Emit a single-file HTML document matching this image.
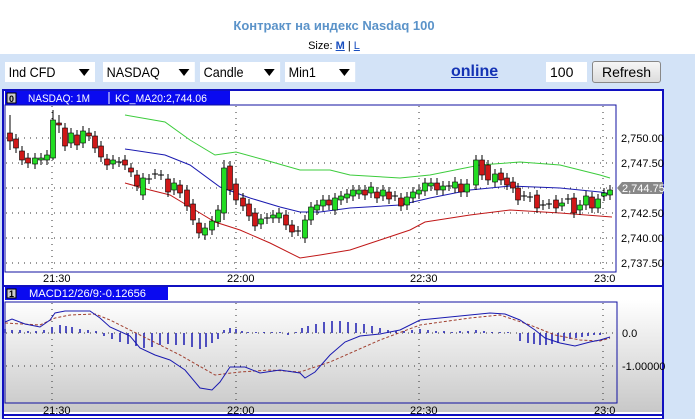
<!DOCTYPE html>
<html><head><meta charset="utf-8"><style>
body{margin:0;width:695px;height:419px;overflow:hidden;background:#fff;font-family:"Liberation Sans",sans-serif;position:relative}
.a{position:absolute}
.sel{position:absolute;top:62px;height:20px;background:#fff;font-size:14px;line-height:20px;padding-left:4px;box-sizing:border-box;transform:scaleX(.9);transform-origin:left}
.sel b{position:absolute;right:6px;top:7px;width:0;height:0;border-left:6px solid transparent;border-right:6px solid transparent;border-top:7px solid #000}
</style></head><body>
<div class="a" style="left:0;top:18px;width:668px;text-align:center;font-size:13px;font-weight:bold;color:#5b93c9">Контракт на индекс Nasdaq 100</div>
<div class="a" style="left:0;top:40px;width:668px;text-align:center;font-size:11px;color:#000">Size: <u style="color:#1a4fbf;font-weight:bold">M</u> | <u style="color:#1a4fbf">L</u></div>
<div class="a" style="left:0;top:54px;width:695px;height:365px;background:#d3e3f7"></div>
<div class="sel" style="left:5px;width:100px">Ind CFD<b></b></div>
<div class="sel" style="left:103px;width:102px">NASDAQ<b></b></div>
<div class="sel" style="left:200px;width:89px">Candle<b></b></div>
<div class="sel" style="left:285px;width:78px">Min1<b></b></div>
<div class="a" style="left:451px;top:63px;font-size:16px;font-weight:bold;color:#1433b4;text-decoration:underline">online</div>
<div class="a" style="left:546px;top:62px;width:41px;height:20px;background:#fff;font-size:14px;line-height:20px;padding-left:4px;box-sizing:border-box">100</div>
<div class="a" style="left:592px;top:61px;width:69px;height:22px;border:1px solid #888;border-radius:3px;background:linear-gradient(#f6f6f6,#dcdcdc);box-sizing:border-box;font-size:14px;line-height:20px;text-align:center">Refresh</div>
<svg class="a" style="left:0;top:0" width="695" height="419" id="s">
<rect x="3" y="90" width="660" height="329" fill="#fff" stroke="#1010c0" stroke-width="2"/>
<defs><linearGradient id="g" x1="0" y1="0" x2="0" y2="1"><stop offset="0" stop-color="#fff"/><stop offset="1" stop-color="#c8c8c8"/></linearGradient></defs>
<rect x="4" y="300" width="658" height="112" fill="url(#g)"/>
<rect x="5" y="91" width="225" height="14" fill="#0a0af0"/>
<rect x="7" y="93" width="9" height="10" fill="#ccc" stroke="#000"/>
<text x="9" y="102" font-size="9" font-weight="bold" font-family="Liberation Sans">0</text>
<text x="28" y="102" font-size="11" fill="#fff" font-family="Liberation Sans" textLength="62" lengthAdjust="spacingAndGlyphs">NASDAQ: 1M</text>
<line x1="109" y1="92" x2="109" y2="104" stroke="#fff"/>
<text x="115" y="102" font-size="11" fill="#fff" font-family="Liberation Sans" textLength="92" lengthAdjust="spacingAndGlyphs">KC_MA20:2,744.06</text>
<rect x="5" y="105" width="611" height="167" fill="none" stroke="#1010a0"/>
<g stroke="#333" stroke-dasharray="1,5" stroke-width="1">
<line x1="6" x2="615" y1="138" y2="138"/><line x1="6" x2="615" y1="163" y2="163"/><line x1="6" x2="615" y1="188" y2="188"/><line x1="6" x2="615" y1="213" y2="213"/><line x1="6" x2="615" y1="238" y2="238"/><line x1="6" x2="615" y1="263" y2="263"/>
<line x1="52" x2="52" y1="106" y2="271"/><line x1="236" x2="236" y1="106" y2="271"/><line x1="419" x2="419" y1="106" y2="271"/><line x1="603" x2="603" y1="106" y2="271"/>
</g>
<g font-size="11" font-family="Liberation Sans" fill="#000">
<text x="621" y="142">2,750.00</text><text x="621" y="167">2,747.50</text><text x="621" y="217">2,742.50</text><text x="621" y="242">2,740.00</text><text x="621" y="267">2,737.50</text>
<text x="43" y="282">21:30</text><text x="227" y="282">22:00</text><text x="410" y="282">22:30</text><text x="594" y="282">23:0</text>
<text x="43" y="414">21:30</text><text x="227" y="414">22:00</text><text x="410" y="414">22:30</text><text x="594" y="414">23:0</text>
</g>
<polygon points="617,188 622,182 663,182 663,194 622,194" fill="#888"/>
<text x="622" y="192" font-size="11" fill="#fff" font-family="Liberation Sans">2,744.75</text>
<polyline fill="none" stroke="#3ccc3c" points="125,115 165,122 190,140 215,155 236,152 265,160 300,170 330,170 350,175 400,178 430,175 480,165 520,162 560,165 600,175 610,178"/>
<polyline fill="none" stroke="#1a1ab0" points="125,149 165,155 190,165 220,187 250,198 280,207 300,212 320,212 350,208 400,205 430,198 470,190 510,186 560,188 600,192 612,194"/>
<polyline fill="none" stroke="#c01818" points="125,183 150,190 170,195 190,207 215,222 240,230 270,243 300,258 320,255 350,250 380,240 410,230 425,222 470,215 510,210 560,213 612,217"/>
<g id="c"></g>
<line x1="4" y1="286" x2="663" y2="286" stroke="#1010c0" stroke-width="2"/>
<rect x="5" y="287" width="163" height="13" fill="#0a0af0"/>
<rect x="7" y="289" width="9" height="9" fill="#ccc" stroke="#000"/>
<text x="9" y="297" font-size="9" font-weight="bold" font-family="Liberation Sans">1</text>
<text x="29" y="297" font-size="11" fill="#fff" font-family="Liberation Sans" textLength="117" lengthAdjust="spacingAndGlyphs">MACD12/26/9:-0.12656</text>
<rect x="5" y="302" width="612" height="101" fill="none" stroke="#1010a0"/>
<g stroke="#333" stroke-dasharray="1,5">
<line x1="6" x2="616" y1="333" y2="333"/><line x1="6" x2="616" y1="366" y2="366"/>
<line x1="52" x2="52" y1="303" y2="402"/><line x1="236" x2="236" y1="303" y2="402"/><line x1="419" x2="419" y1="303" y2="402"/><line x1="603" x2="603" y1="303" y2="402"/>
</g>
<text x="622" y="337" font-size="11" font-family="Liberation Sans">0.0</text>
<text x="622" y="370" font-size="11" font-family="Liberation Sans">-1.00000</text>
<g id="h" stroke="#1a1ab0" stroke-width="1.5"></g>
<polyline fill="none" stroke="#a04030" stroke-dasharray="3,2" points="5,323 40,325 55,318 70,315 95,314 110,320 140,335 180,355 215,375 240,372 270,370 300,372 330,362 380,340 420,325 470,318 500,315 530,325 555,335 580,340 600,341 610,338"/>
<polyline fill="none" stroke="#1a1ab0" points="5,322 12,319 25,324 40,327 50,320 55,313 65,311 90,311 100,318 110,327 130,336 140,348 155,355 170,360 185,370 200,388 212,390 220,382 230,367 245,367 260,373 280,370 300,373 305,378 315,372 330,355 345,342 360,336 380,334 400,330 420,320 440,318 470,315 490,313 505,314 520,320 535,330 545,338 560,343 575,346 590,342 600,340 610,337"/>
<line x1="4" y1="415" x2="663" y2="415" stroke="#1010c0" stroke-width="2"/>
</svg>
<script>
var d=[[10,133,141,115,150],[16,139,148],[22,151,160],[28,158,163],[35,164,158],[41,160,158],[47,160,155],[53,158,120,110,160],[59,123,125,115,133],[65,128,146],[71,143,133],[77,135,145],[83,143,131],[89,133,136],[95,136,148],[101,146,157],[107,159,165],[113,164,160],[119,162,162],[125,160,165],[131,168,172],[137,175,186],[143,195,178],[149,179,179],[155,174,174],[161,175,175],[168,179,192],[174,190,183],[180,185,193],[187,190,206],[193,204,220],[199,223,233],[205,235,228],[212,230,221],[218,222,210],[224,213,168,160,220],[230,166,190],[236,184,200],[243,198,206],[249,204,216],[255,213,226],[261,224,219],[267,219,218],[273,218,215],[279,218,213],[286,215,225],[292,225,232],[298,231,231],[305,238,220],[311,220,207],[317,210,205],[323,206,200],[329,200,205],[335,210,198],[341,200,196],[347,198,194],[353,196,190],[359,194,190],[365,190,195],[371,193,187],[377,192,198],[383,196,190],[389,192,199],[395,196,196],[401,198,206],[407,205,197],[413,198,192],[419,194,190],[425,191,183],[431,186,183],[437,183,190],[443,190,186],[449,186,186],[455,188,182],[461,184,192],[467,192,184],[476,185,160,155,190],[482,160,175],[488,165,180],[495,182,174],[501,173,180],[507,178,185],[513,182,188],[518,188,200],[524,196,196],[530,197,197],[537,195,208],[543,205,205],[549,204,204],[556,200,208],[562,206,203],[568,199,199],[574,198,213],[580,210,205],[586,205,196],[592,197,208],[598,208,199],[604,196,193],[610,195,190]];
var s="";d.forEach(function(c){var x=c[0],o=c[1],cl=c[2],t=Math.min(o,cl),b=Math.max(o,cl),hi=c[3]||t-5,lo=c[4]||b+5;
s+='<line x1="'+x+'" x2="'+x+'" y1="'+hi+'" y2="'+lo+'" stroke="#000"/>';
if(b-t<1.5)s+='<line x1="'+(x-3)+'" x2="'+(x+3)+'" y1="'+t+'" y2="'+t+'" stroke="#000"/>';
else s+='<rect x="'+(x-2.5)+'" y="'+t+'" width="5" height="'+(b-t)+'" fill="'+(cl<o?'#22dd22':'#d01818')+'" stroke="#000" stroke-width=".6"/>';});
document.getElementById('c').innerHTML=s;
var h=[[5,4],[12,3],[20,3],[28,2],[36,2],[44,3],[52,6],[60,8],[66,7],[72,6],[80,4],[88,3],[96,2],[104,-3],[112,-6],[120,-9],[128,-11],[136,-13],[144,-15],[152,-14],[160,-12],[168,-11],[176,-12],[184,-12],[192,-14],[200,-16],[206,-14],[212,-10],[218,-6],[224,3],[230,5],[236,4],[242,2],[248,1],[256,1],[264,1],[272,1],[280,1],[288,-2],[296,1],[302,5],[308,7],[316,9],[324,11],[332,12],[340,12],[348,11],[356,10],[364,9],[372,7],[380,5],[388,3],[396,2],[404,2],[412,3],[420,4],[428,3],[436,2],[444,2],[452,1],[460,2],[468,2],[476,3],[484,2],[492,1],[500,1],[508,1],[520,-8],[528,-10],[534,-11],[540,-12],[546,-12],[552,-11],[558,-10],[564,-8],[570,-6],[576,-5],[582,-4],[588,-3],[594,-2],[600,-2]];
var t="";h.forEach(function(v){t+='<line x1="'+v[0]+'" x2="'+v[0]+'" y1="333" y2="'+(333-v[1])+'"/>';});
document.getElementById('h').innerHTML=t;
</script>
</body></html>
